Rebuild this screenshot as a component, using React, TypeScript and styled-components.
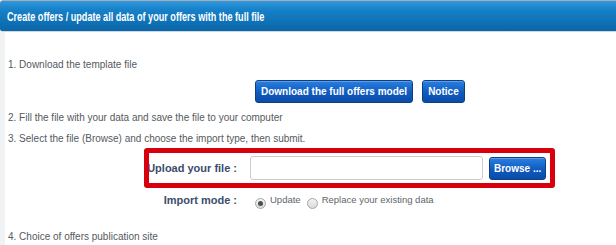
import styled, { createGlobalStyle } from "styled-components";

const GlobalStyle = createGlobalStyle`
    body {
        margin: 0;
        background: #ffffff;
        font-family: "Liberation Sans", Arial, sans-serif;
    }
`;

const Page = styled.div`
    width: 616px;
    height: 245px;
    overflow: hidden;
    background: #ffffff;
`;

const Header = styled.div`
    height: 30px;
    border-top: 1px solid #a9acb0;
    border-bottom: 1px solid #d3d6da;
    border-radius: 3px 0 0 3px;
    background: linear-gradient(#2f98de, #1680c8 30%, #0a66a8);
    display: flex;
    align-items: center;
    padding-left: 7px;
    h1 {
        margin: 0;
        font-family: "Liberation Sans", Arial, sans-serif;
        font-weight: bold;
        font-size: 13px;
        color: #ffffff;
        white-space: nowrap;
        /* the original face is a condensed one */
        transform: scaleX(0.7);
        transform-origin: left center;
    }
`;

const Body = styled.div`
    border-left: 5px solid #f1f2f4;
    padding: 26px 0 0 3px;
    height: 200px;
`;

const Step = styled.p<{ gap?: number }>`
    margin: ${(p) => p.gap ?? 0}px 0 0;
    font-size: 10px;
    line-height: 14px;
    color: #555a60;
`;

const ButtonRow = styled.div`
    display: flex;
    gap: 9px;
    margin: 8px 0 0 247px;
`;

const BlueButton = styled.button<{ pad?: number }>`
    height: 23px;
    padding: 0 ${(p) => p.pad ?? 5}px;
    border: 1px solid #0b3f86;
    border-radius: 3px;
    background: linear-gradient(#2a7fe0, #0f5bc0 55%, #0b4ca6);
    box-shadow: inset 0 1px 0 rgba(255, 255, 255, 0.25);
    color: #ffffff;
    font-family: "Liberation Sans", Arial, sans-serif;
    font-weight: bold;
    font-size: 10px;
    cursor: pointer;
`;

const Form = styled.div`
    margin-top: 2px;
`;

const FormRow = styled.div<{ boxed?: boolean }>`
    position: relative;
    display: grid;
    grid-template-columns: 229px 1fr;
    column-gap: 13px;
    align-items: center;
    height: ${(p) => (p.boxed ? 40 : 24)}px;
`;

const Highlight = styled.div`
    position: absolute;
    left: 136px;
    top: 0;
    width: 401px;
    height: 30px;
    border: 5px solid #d8000d;
    border-radius: 3px;
    pointer-events: none;
`;

const Label = styled.label`
    text-align: right;
    font-weight: bold;
    font-size: 11px;
    color: #3b4d6c;
`;

const FileField = styled.div`
    display: flex;
    align-items: center;
    gap: 6px;
`;

const TextInput = styled.input`
    width: 233px;
    height: 24px;
    box-sizing: border-box;
    border: 1px solid #c9ccd1;
    border-radius: 3px;
    background: #ffffff;
`;

const Options = styled.div`
    display: flex;
    align-items: flex-start;
    gap: 6px;
    padding: 2px 0 0 5px;
`;

const Option = styled.span`
    display: flex;
    align-items: flex-start;
    gap: 4px;
    font-size: 9.5px;
    color: #60656b;
`;

const Radio = styled.span<{ checked?: boolean }>`
    position: relative;
    width: 9px;
    height: 9px;
    margin-top: 4px;
    border: 1px solid #a4a7ab;
    border-radius: 50%;
    background: linear-gradient(#f4f4f4, #d9d9d9);
    &::after {
        content: "";
        display: ${(p) => (p.checked ? "block" : "none")};
        position: absolute;
        left: 2px;
        top: 2px;
        width: 5px;
        height: 5px;
        border-radius: 50%;
        background: #4a4d52;
    }
`;

function App() {
    return (
        <Page>
            <GlobalStyle />
            <Header>
                <h1>Create offers / update all data of your offers with the full file</h1>
            </Header>
            <Body>
                <Step>1. Download the template file</Step>
                <ButtonRow>
                    <BlueButton>Download the full offers model</BlueButton>
                    <BlueButton>Notice</BlueButton>
                </ButtonRow>
                <Step gap={8}>2. Fill the file with your data and save the file to your computer</Step>
                <Step gap={7}>3. Select the file (Browse) and choose the import type, then submit.</Step>
                <Form>
                    <FormRow boxed>
                        <Label>Upload your file :</Label>
                        <FileField>
                            <TextInput type="text" />
                            <BlueButton pad={4}>Browse ...</BlueButton>
                        </FileField>
                        <Highlight />
                    </FormRow>
                    <FormRow>
                        <Label>Import mode :</Label>
                        <Options>
                            <Option>
                                <Radio checked />
                                Update
                            </Option>
                            <Option>
                                <Radio />
                                Replace your existing data
                            </Option>
                        </Options>
                    </FormRow>
                </Form>
                <Step gap={18}>4. Choice of offers publication site</Step>
            </Body>
        </Page>
    );
}

export default App;
